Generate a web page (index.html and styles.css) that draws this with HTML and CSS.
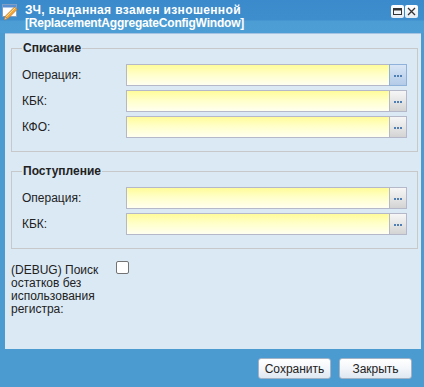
FILE: index.html
```html
<!DOCTYPE html>
<html lang="ru">
<head>
<meta charset="utf-8">
<title>ReplacementAggregateConfigWindow</title>
<link rel="stylesheet" href="styles.css">
</head>
<body>
<div class="window">
  <div class="header">
    <svg class="win-icon" width="20" height="20" viewBox="0 0 20 20">
      <rect x="2.5" y="3.5" width="14" height="12" fill="#fbfdff" stroke="#7f9fc4"/>
      <rect x="3" y="4" width="13" height="2.5" fill="#5a8fd2"/>
      <path d="M5 15.5 L14.5 6 L17 8.5 L7.5 18 Z" fill="#f3a53a" stroke="#b8742c" stroke-width="0.7"/>
      <path d="M6.3 15.7 L15 7" stroke="#fbe08a" stroke-width="1"/>
      <path d="M5 15.5 L7.5 18 L4 19 Z" fill="#e8c89a" stroke="#9a7040" stroke-width="0.5"/>
    </svg>
    <div class="title"><span class="t1">ЗЧ, выданная взамен изношенной</span><span class="t2">[ReplacementAggregateConfigWindow]</span></div>
    <div class="tools">
      <div class="tool">
        <svg width="13" height="13" viewBox="0 0 13 13"><rect x="2.5" y="3.5" width="8" height="6" fill="none" stroke="#333"/><rect x="3" y="4" width="7" height="1.5" fill="#333"/></svg>
      </div>
      <div class="tool">
        <svg width="13" height="13" viewBox="0 0 13 13"><path d="M3 3 L10 10 M10 3 L3 10" stroke="#333" stroke-width="1.3"/></svg>
      </div>
    </div>
  </div>

  <div class="body">
    <fieldset class="group">
      <legend>Списание</legend>
      <div class="row"><label class="lbl">Операция:</label><div class="combo"><div class="input"></div><div class="trigger hover"><i></i><i></i><i></i></div></div></div>
      <div class="row"><label class="lbl">КБК:</label><div class="combo"><div class="input"></div><div class="trigger"><i></i><i></i><i></i></div></div></div>
      <div class="row"><label class="lbl">КФО:</label><div class="combo"><div class="input"></div><div class="trigger"><i></i><i></i><i></i></div></div></div>
    </fieldset>

    <fieldset class="group second">
      <legend>Поступление</legend>
      <div class="row"><label class="lbl">Операция:</label><div class="combo"><div class="input"></div><div class="trigger"><i></i><i></i><i></i></div></div></div>
      <div class="row"><label class="lbl">КБК:</label><div class="combo"><div class="input"></div><div class="trigger"><i></i><i></i><i></i></div></div></div>
    </fieldset>

    <div class="debug">
      <label class="debug-lbl">(DEBUG) Поиск остатков без использования регистра:</label>
      <span class="checkbox"></span>
    </div>
  </div>

  <div class="footer">
    <button class="btn">Сохранить</button>
    <button class="btn">Закрыть</button>
  </div>
</div>
</body>
</html>
```

FILE: styles.css
```css
html, body {
  margin: 0;
  padding: 0;
}
body {
  font-family: "Liberation Sans", Arial, sans-serif;
  font-size: 12px;
  color: #222;
}
.window {
  width: 424px;
  height: 387px;
  background: #4b9bd1;
  display: flex;
  flex-direction: column;
  overflow: hidden;
}
.header {
  height: 33px;
  display: flex;
  align-items: flex-start;
  background: linear-gradient(to bottom, #3b8acb 0, #3e8ecd 20px, #4c9dd4 21px, #4d9ed4 33px);
  flex: none;
}
.win-icon {
  margin: 1px 0 0 0;
  flex: none;
}
.title {
  margin-left: 5px;
  padding-top: 4px;
  color: #fff;
  font-family: "Liberation Sans", Arial, sans-serif;
  font-weight: bold;
  font-size: 12px;
  line-height: 13px;
  flex: 1;
  display: flex;
  flex-direction: column;
  align-items: flex-start;
}
.t1 {
  letter-spacing: 0.35px;
}
.t2 {
  letter-spacing: -0.2px;
}
.tools {
  display: flex;
  gap: 1px;
  margin: 5px 6px 0 0;
}
.tool {
  width: 13px;
  height: 13px;
  background: linear-gradient(#ffffff, #e4ecf4);
  border-radius: 2px;
  display: flex;
}
.body {
  flex: none;
  height: 315px;
  margin: 0 3px 0 5px;
  border-top: 1px solid #a6c4e2;
  background: #dbe9f5;
  padding: 0 3px 0 6px;
}
.group {
  margin: 7px 0 0 0;
  padding: 9px 10px 13px 10px;
  border: 1px solid #c6c8ca;
  display: flex;
  flex-direction: column;
  gap: 4px;
  min-width: 0;
}
.group.second {
  margin-top: 12px;
}
.group legend {
  font-weight: bold;
  font-size: 12px;
  line-height: 14px;
  padding: 0 1px;
  margin-left: 0;
  color: #222;
}
.row {
  display: flex;
  align-items: center;
  height: 22px;
}
.lbl {
  width: 104px;
  flex: none;
}
.combo {
  flex: 1;
  display: flex;
  height: 22px;
}
.input {
  flex: 1;
  box-sizing: border-box;
  border: 1px solid #b5b8c8;
  border-right: none;
  background: linear-gradient(to bottom, #fffc9a 0, #ffffc8 45%, #fffff0 100%);
}
.trigger {
  width: 18px;
  flex: none;
  box-sizing: border-box;
  border: 1px solid #b5b8c8;
  background: linear-gradient(to bottom, #f6f6f6 0, #e6e6e6 50%, #d3d3d3 100%);
  display: flex;
  justify-content: center;
  align-items: center;
  gap: 1px;
}
.trigger.hover {
  border-color: #8fb2da;
  background: linear-gradient(to bottom, #d9e6f6 0, #c5d8ef 50%, #b4cbe8 100%);
}
.trigger i {
  display: block;
  width: 2px;
  height: 2px;
  background: #4f7fb4;
  margin-top: 1px;
}
.debug {
  display: flex;
  align-items: flex-start;
  margin-top: 12px;
}
.debug-lbl {
  width: 100px;
  padding-right: 5px;
  flex: none;
  line-height: 13px;
  padding-top: 3px;
}
.checkbox {
  width: 11px;
  height: 11px;
  border: 1px solid #737373;
  border-radius: 2px;
  background: #fff;
}
.footer {
  flex: 1;
  display: flex;
  justify-content: flex-end;
  align-items: flex-start;
  gap: 8px;
  padding: 9px 12px 0 0;
}
.btn {
  width: 73px;
  height: 21px;
  border: 1px solid #a3b3c7;
  border-radius: 3px;
  background: linear-gradient(to bottom, #ffffff 0, #f3f6fa 50%, #dfe7f1 100%);
  font-family: "Liberation Sans", Arial, sans-serif;
  font-size: 12px;
  color: #222;
  padding: 0;
  margin: 0;
}
```
